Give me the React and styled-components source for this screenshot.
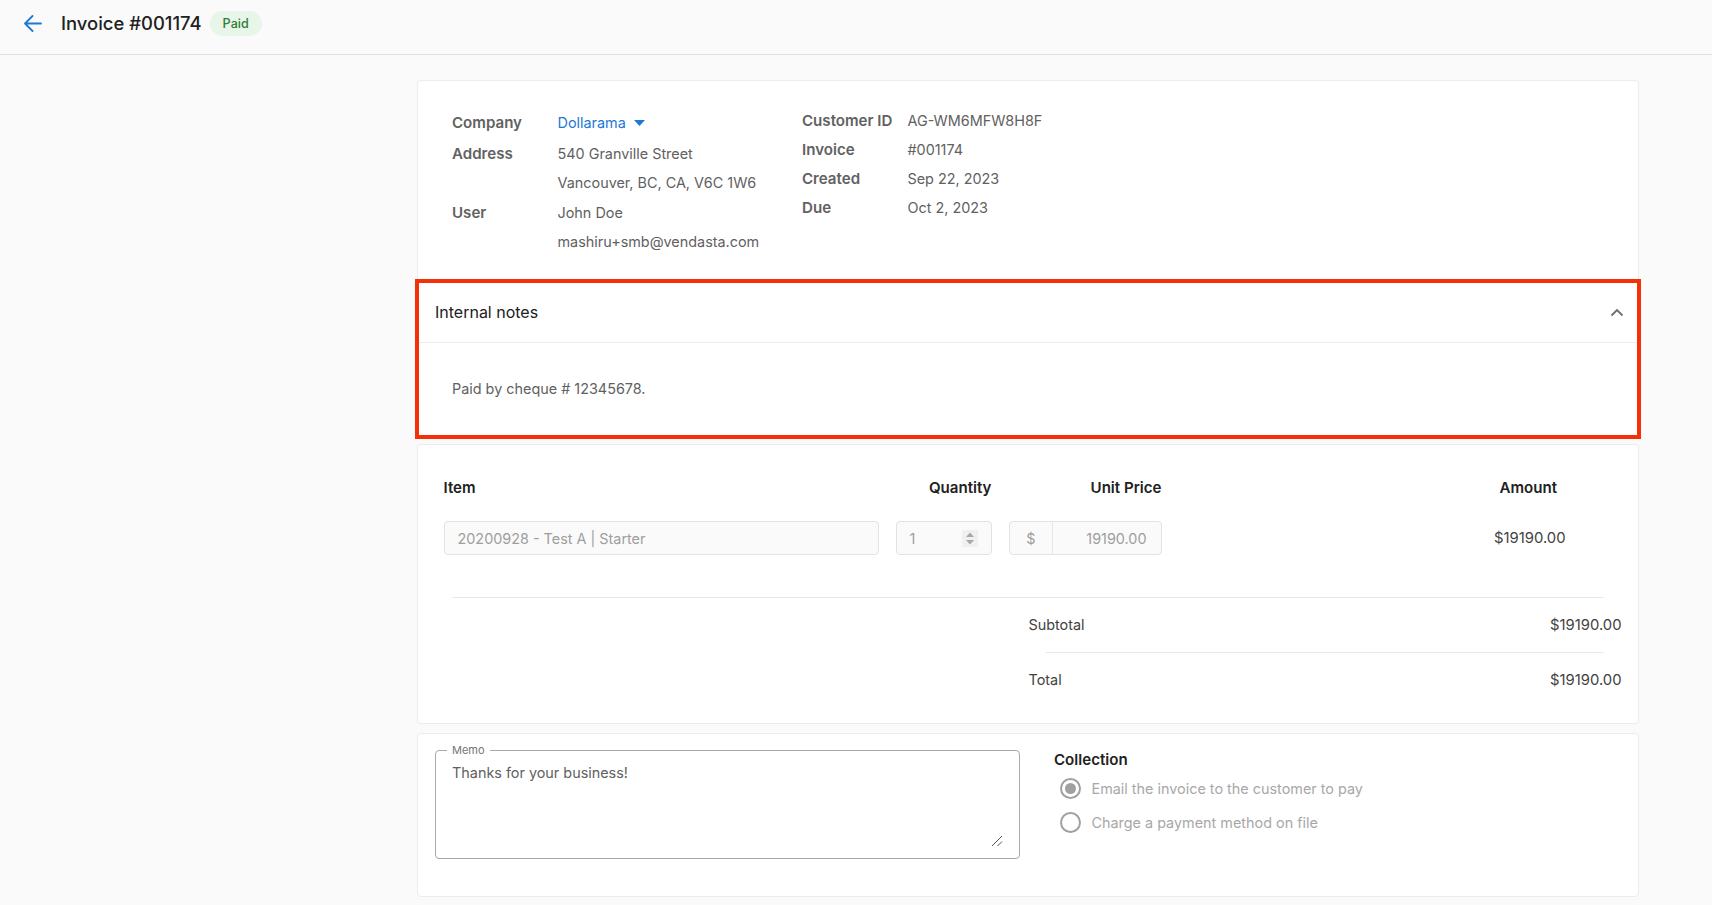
import React from "react";
import styled, { createGlobalStyle } from "styled-components";

const Global = createGlobalStyle`
  html, body { margin: 0; padding: 0; background: #fafafa; }
  body { font-family: Inter, "Noto Sans", sans-serif; font-size: 14.4px; color: #616161; overflow: hidden; }
  * { box-sizing: border-box; }
`;

const Page = styled.div`
  display: flex;
  flex-direction: column;
  height: 905px;
`;
const Header = styled.header`
  display: flex;
  align-items: center;
  height: 55px;
  padding: 0 0 8px 24px;
  border-bottom: 1px solid #e3e3e3;
`;
const BackIcon = styled.svg`
  width: 18px;
  height: 17px;
  margin-right: 19px;
  fill: none;
  stroke: #1e78d6;
  stroke-width: 1.8;
  stroke-linecap: round;
  stroke-linejoin: round;
`;
const Title = styled.h1`
  margin: 0 8px 0 0;
  font-size: 18.45px;
  line-height: 26px;
  font-weight: 500;
  color: #212121;
`;
const Badge = styled.span`
  display: inline-flex;
  align-items: center;
  justify-content: center;
  width: 52px;
  height: 25px;
  border-radius: 13px;
  background: #e8f5e9;
  color: #2e7d32;
  font-size: 12.6px;
  font-weight: 500;
`;
const Main = styled.main`
  display: flex;
  flex-direction: column;
  padding: 25px 73px 0 417px;
`;
const Card = styled.section`
  background: #fff;
  border: 1px solid #ececec;
  border-radius: 4px;
  margin-bottom: ${p => p.$gap || 0}px;
`;
const Details = styled.div`
  display: flex;
  height: 201px;
  padding: 25px 0 0 34px;
`;
const InfoGrid = styled.dl`
  display: grid;
  grid-template-columns: 105.5px auto;
  grid-template-rows: ${p => p.$rows};
  align-items: center;
  align-content: start;
  margin: ${p => p.$top}px 0 0 0;
  width: ${p => p.$width}px;
`;
const Term = styled.dt`
  grid-column: 1;
  font-size: 15.1px;
  font-weight: 600;
  color: #616161;
`;
const Value = styled.dd`
  grid-column: 2;
  margin: 0;
  color: #616161;
  white-space: nowrap;
`;
const CompanyLink = styled.span`
  display: inline-flex;
  align-items: center;
  gap: 8px;
  color: #1e78d6;
`;
const Caret = styled.svg`
  width: 11px;
  height: 6px;
  fill: #1e78d6;
`;
const Notes = styled.div`
  height: 154px;
  outline: 4px solid #f52f08;
  outline-offset: -1px;
`;
const NotesHead = styled.div`
  display: flex;
  align-items: center;
  justify-content: space-between;
  height: 61px;
  padding: 0 14px 0 17px;
  border-bottom: 1px solid #ececec;
  color: #212121;
  font-size: 16px;
`;
const Chevron = styled.svg`
  width: 14px;
  height: 9px;
  fill: none;
  stroke: #6e6e6e;
  stroke-width: 1.8;
`;
const NotesBody = styled.p`
  margin: 0;
  padding: 35px 0 0 34px;
  line-height: 22px;
`;
const Items = styled.div`
  height: 278px;
  padding: 29px 0 0 25.5px;
`;
const Row = styled.div`
  display: grid;
  grid-template-columns: 435px 17px 96px 17px 153px 1fr;
  align-items: center;
  margin-top: ${p => p.$top || 0}px;
`;
const ColHead = styled.div`
  grid-column: ${p => p.$col};
  font-size: 15.1px;
  font-weight: 600;
  color: #212121;
  text-align: ${p => p.$align || "left"};
  line-height: 28px;
  padding-right: ${p => p.$shift || 0}px;
`;
const Field = styled.div`
  grid-column: ${p => p.$col};
  display: flex;
  align-items: center;
  height: 34px;
  background: #fafafa;
  border: 1px solid #e2e2e2;
  border-radius: 4px;
  color: #9e9e9e;
  padding: 0 ${p => p.$pad ?? 13}px;
  overflow: hidden;
`;
const Spinner = styled.svg`
  width: 16px;
  height: 17px;
  margin-left: auto;
  background: #f0f0f0;
  fill: #a8a8a8;
`;
const Prefix = styled.span`
  width: 43.5px;
  align-self: stretch;
  display: flex;
  align-items: center;
  justify-content: center;
  border-right: 1px solid #e6e6e6;
`;
const PriceValue = styled.span`
  flex: 1;
  text-align: right;
  padding-right: 14px;
`;
const AmountCell = styled.div`
  grid-column: 6;
  font-size: 14.8px;
  color: #424242;
  text-align: right;
  padding-right: 72.5px;
`;
const Divider = styled.hr`
  border: 0;
  border-top: 1px solid #e8e8e8;
  margin: ${p => p.$top}px 34px 0 ${p => p.$left}px;
`;
const TotalRow = styled.div`
  display: flex;
  justify-content: space-between;
  padding: 0 16.5px 0 585px;
  margin-top: ${p => p.$top}px;
  font-size: 14.8px;
  line-height: 22px;
  color: #424242;
`;
const TotalLabel = styled.span`
  font-size: 14.4px;
`;
const Bottom = styled.div`
  display: flex;
  height: 162px;
  padding: 9px 0 0 17px;
`;
const MemoBox = styled.fieldset`
  position: relative;
  width: 585px;
  height: 116px;
  margin: 0;
  padding: 0 0 0 16px;
  border: 1px solid #a9a9a9;
  border-radius: 4px;
`;
const MemoLegend = styled.legend`
  padding: 0 5px;
  margin-left: -5px;
  font-size: 11px;
  line-height: 14px;
  color: #757575;
`;
const MemoText = styled.div`
  color: #616161;
  line-height: 22px;
  margin-top: 5px;
`;
const Resize = styled.svg`
  position: absolute;
  right: 16px;
  bottom: 11px;
  width: 12px;
  height: 12px;
  stroke: #555;
  stroke-width: 1;
  fill: none;
`;
const Collection = styled.div`
  margin-left: 34px;
  padding-top: 6px;
`;
const CollectionTitle = styled.div`
  font-size: 15.1px;
  font-weight: 600;
  color: #212121;
  line-height: 22px;
`;
const RadioRow = styled.div`
  display: flex;
  align-items: center;
  height: 34px;
  padding-left: 5.5px;
  gap: 11px;
  color: #a8a8a8;
`;
const Radio = styled.span`
  display: flex;
  align-items: center;
  justify-content: center;
  width: 21px;
  height: 21px;
  border: 2px solid #a0a0a0;
  border-radius: 50%;
  &::after {
    content: "";
    width: 11px;
    height: 11px;
    border-radius: 50%;
    background: ${p => (p.$on ? "#a0a0a0" : "transparent")};
  }
`;

const companyRows = [
  ["Address", "540 Granville Street"],
  ["", "Vancouver, BC, CA, V6C 1W6"],
  ["User", "John Doe"],
  ["", "mashiru+smb@vendasta.com"],
];
const metaRows = [
  ["Customer ID", "AG-WM6MFW8H8F"],
  ["Invoice", "#001174"],
  ["Created", "Sep 22, 2023"],
  ["Due", "Oct 2, 2023"],
];

export default function App() {
  return (
    <Page>
      <Global />
      <Header>
        <BackIcon viewBox="0 0 18 17">
          <path d="M8.5 1 1 8.5 8.5 16M1 8.5h16" />
        </BackIcon>
        <Title>Invoice #001174</Title>
        <Badge>Paid</Badge>
      </Header>
      <Main>
        <Card $gap={7}>
          <Details>
            <InfoGrid $rows="32px 29px 30px 29px 29px" $top={0.5} $width={350}>
              <Term>Company</Term>
              <Value>
                <CompanyLink>
                  Dollarama
                  <Caret viewBox="0 0 11 6"><path d="M0 0h11L5.5 6z" /></Caret>
                </CompanyLink>
              </Value>
              {companyRows.map(([k, v]) => (
                <React.Fragment key={v}>
                  <Term>{k}</Term>
                  <Value>{v}</Value>
                </React.Fragment>
              ))}
            </InfoGrid>
            <InfoGrid $rows="repeat(4, 29px)" $top={0} $width={400}>
              {metaRows.map(([k, v]) => (
                <React.Fragment key={k}>
                  <Term>{k}</Term>
                  <Value>{v}</Value>
                </React.Fragment>
              ))}
            </InfoGrid>
          </Details>
          <Notes>
            <NotesHead>
              Internal notes
              <Chevron viewBox="0 0 14 9"><path d="M1.5 7.5 7 2l5.5 5.5" /></Chevron>
            </NotesHead>
            <NotesBody>Paid by cheque # 12345678.</NotesBody>
          </Notes>
        </Card>
        <Card $gap={9}>
          <Items>
            <Row>
              <ColHead $col={1}>Item</ColHead>
              <ColHead $col={3} $align="right">Quantity</ColHead>
              <ColHead $col={5} $align="right">Unit Price</ColHead>
              <ColHead $col={6} $align="right" $shift={81}>Amount</ColHead>
            </Row>
            <Row $top={19}>
              <Field $col={1}>20200928 - Test A | Starter</Field>
              <Field $col={3} $pad={13}>
                1
                <Spinner viewBox="0 0 16 17">
                  <path d="M8 2.5 12 7H4zM8 14.5 4 10h8z" />
                </Spinner>
              </Field>
              <Field $col={5} $pad={0}>
                <Prefix>$</Prefix>
                <PriceValue>19190.00</PriceValue>
              </Field>
              <AmountCell>$19190.00</AmountCell>
            </Row>
            <Divider $top={42} $left={8.5} />
            <TotalRow $top={16}><TotalLabel>Subtotal</TotalLabel><span>$19190.00</span></TotalRow>
            <Divider $top={16} $left={602.5} />
            <TotalRow $top={16}><TotalLabel>Total</TotalLabel><span>$19190.00</span></TotalRow>
          </Items>
        </Card>
        <Card>
          <Bottom>
            <MemoBox>
              <MemoLegend>Memo</MemoLegend>
              <MemoText>Thanks for your business!</MemoText>
              <Resize viewBox="0 0 12 12">
                <path d="M1 11 11 1M6.5 11 11 6.5" />
              </Resize>
            </MemoBox>
            <Collection>
              <CollectionTitle>Collection</CollectionTitle>
              <RadioRow><Radio $on />Email the invoice to the customer to pay</RadioRow>
              <RadioRow><Radio />Charge a payment method on file</RadioRow>
            </Collection>
          </Bottom>
        </Card>
      </Main>
    </Page>
  );
}
